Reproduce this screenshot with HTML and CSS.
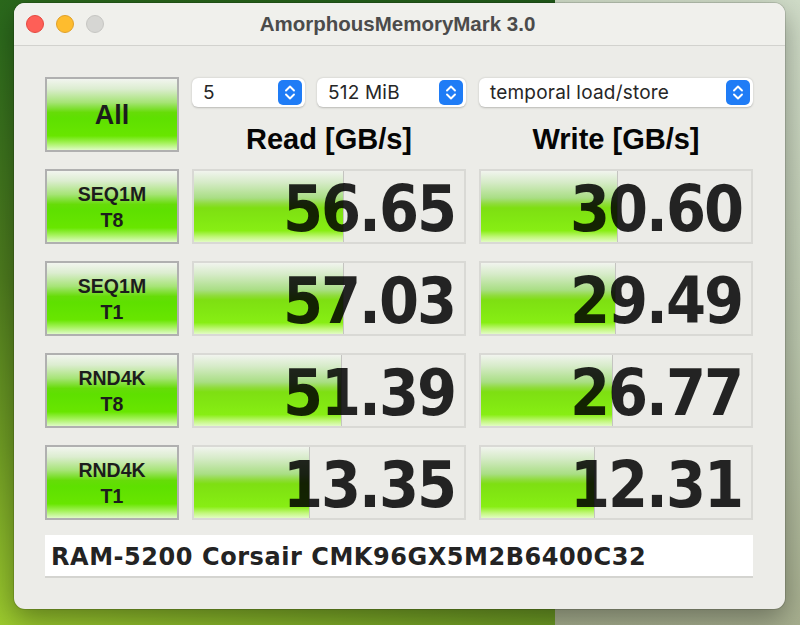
FILE: index.html
```html
<!DOCTYPE html>
<html>
	<head>
		<meta charset="utf-8" />
		<title>AmorphousMemoryMark 3.0</title>
		<link rel="stylesheet" href="styles.css">
	</head>
	<body>
		<div id="window">
			<div id="titlebar">
				<div id="lights">
					<span class="light red"></span>
					<span class="light yellow"></span>
					<span class="light gray"></span>
				</div>
				<p id="title">AmorphousMemoryMark 3.0</p>
			</div>
			<div id="content">
				<div id="grid">
					<div class="test all">All</div>
					<div id="head">
						<div class="selects">
							<div class="select count">
								<span>5</span>
								<svg class="stepper" viewBox="0 0 24 25"><rect width="24" height="25" rx="5"/><path d="M8 10.5 L12 6.5 L16 10.5 M8 14.5 L12 18.5 L16 14.5"/></svg>
							</div>
							<div class="select size">
								<span>512 MiB</span>
								<svg class="stepper" viewBox="0 0 24 25"><rect width="24" height="25" rx="5"/><path d="M8 10.5 L12 6.5 L16 10.5 M8 14.5 L12 18.5 L16 14.5"/></svg>
							</div>
						</div>
						<div class="select mode">
							<span>temporal load/store</span>
							<svg class="stepper" viewBox="0 0 24 25"><rect width="24" height="25" rx="5"/><path d="M8 10.5 L12 6.5 L16 10.5 M8 14.5 L12 18.5 L16 14.5"/></svg>
						</div>
						<p class="label">Read [GB/s]</p>
						<p class="label">Write [GB/s]</p>
					</div>

					<div class="test">SEQ1M<br>T8</div>
					<div class="meter"><div class="fill" style="width:55%"></div><span>56.65</span></div>
					<div class="meter"><div class="fill" style="width:50.4%"></div><span>30.60</span></div>

					<div class="test">SEQ1M<br>T1</div>
					<div class="meter"><div class="fill" style="width:55%"></div><span>57.03</span></div>
					<div class="meter"><div class="fill" style="width:49.6%"></div><span>29.49</span></div>

					<div class="test">RND4K<br>T8</div>
					<div class="meter"><div class="fill" style="width:54.4%"></div><span>51.39</span></div>
					<div class="meter"><div class="fill" style="width:48.5%"></div><span>26.77</span></div>

					<div class="test">RND4K<br>T1</div>
					<div class="meter"><div class="fill" style="width:42.7%"></div><span>13.35</span></div>
					<div class="meter"><div class="fill" style="width:42%"></div><span>12.31</span></div>
				</div>
				<div id="info">RAM-5200 Corsair CMK96GX5M2B6400C32</div>
			</div>
		</div>
	</body>
</html>
```
FILE: styles.css
```css
p{
	margin: 0;
}
body{
	margin: 0;
	height: 625px;
	overflow: hidden;
	padding: 3px 0 0 14px;
	box-sizing: border-box;
	font-family: "Liberation Sans", Arial, sans-serif;
	background:
		linear-gradient(180deg, #d0dcc8 0%, #bcc8ae 55%, #a6ae8e 100%) right top / 245px 100% no-repeat,
		linear-gradient(200deg, #1d5418 0%, #2c6a1c 35%, #4e7c1e 62%, #6f9c24 80%, #9cca2e 100%);
}
#window{
	width: 771px;
	height: 606px;
	background: #ecece8;
	border-radius: 11px;
	box-shadow: 0 0 0 1px rgba(0,0,0,0.12), 0 10px 28px rgba(0,0,0,0.35);
	overflow: hidden;
}
#titlebar{
	height: 42px;
	background: #f0f0ec;
	border-bottom: 1px solid #d2d2ce;
	display: flex;
	align-items: center;
	position: relative;
}
#lights{
	display: flex;
	gap: 12px;
	padding-left: 12px;
}
.light{
	width: 18px;
	height: 18px;
	border-radius: 50%;
	box-sizing: border-box;
}
.light.red{
	background: #fe5f57;
	border: 1px solid #e5483f;
}
.light.yellow{
	background: #febc2e;
	border: 1px solid #e0a028;
}
.light.gray{
	background: #d6d6d3;
	border: 1px solid #c6c6c3;
}
#title{
	position: absolute;
	left: 0;
	right: 0;
	text-align: center;
	font-weight: bold;
	font-size: 20.5px;
	color: #4b4b4b;
	padding-right: 4px;
	pointer-events: none;
}
#content{
	padding: 31px 32px 0 31px;
}
#grid{
	display: grid;
	grid-template-columns: 134px 274px 274px;
	grid-auto-rows: 75px;
	column-gap: 13px;
	row-gap: 17px;
}
.test{
	box-sizing: border-box;
	border: 2px solid #b0b0b0;
	background: linear-gradient(180deg, #f2f5ef 0%, #dcedd0 14%, #a6e476 33%, #66dc08 47%, #5ee000 55%, #68e600 80%, #a4f25a 90%, #dffbc6 100%);
	display: flex;
	align-items: center;
	justify-content: center;
	text-align: center;
	font-weight: bold;
	font-size: 19.5px;
	line-height: 26px;
	color: #1c1c1c;
	padding-top: 1px;
}
.test.all{
	font-size: 27px;
}
#head{
	grid-column: 2 / 4;
	display: grid;
	grid-template-columns: 274px 274px;
	grid-template-rows: 29px auto;
	column-gap: 13px;
	padding-top: 1px;
}
.selects{
	display: flex;
	gap: 12px;
}
.select{
	display: flex;
	align-items: center;
	justify-content: space-between;
	height: 29px;
	box-sizing: border-box;
	padding: 0 3px 0 11px;
	background: #fff;
	border-radius: 6px;
	box-shadow: 0 0.5px 2px rgba(0,0,0,0.22);
	font-family: Inter, "Liberation Sans", sans-serif;
	font-size: 19px;
	letter-spacing: 0.2px;
	color: #262626;
}
.select.count{
	width: 113px;
}
.select.size{
	flex: 1;
}
.stepper{
	width: 24px;
	height: 25px;
}
.stepper rect{
	fill: #1f7cf6;
}
.stepper path{
	fill: none;
	stroke: #fff;
	stroke-width: 1.9;
	stroke-linecap: round;
	stroke-linejoin: round;
}
.label{
	text-align: center;
	font-weight: bold;
	font-size: 29px;
	line-height: 34px;
	margin-top: 15px;
	color: #050505;
}
.meter{
	position: relative;
	box-sizing: border-box;
	border: 2px solid #d9d9d5;
	background: #ebebe7;
	display: flex;
	align-items: center;
	justify-content: flex-end;
	padding: 5px 9px 0 0;
}
.fill{
	position: absolute;
	left: 0;
	top: 0;
	bottom: 0;
	border-right: 1px solid #c4c4c0;
	background: linear-gradient(180deg, #f1f4ee 0%, #d6ebc8 16%, #a9de84 38%, #8fdc3c 46%, #7edf12 52%, #82e812 70%, #88ee14 84%, #c2f77c 93%, #e2fcc4 100%);
}
.meter span{
	position: relative;
	font-family: "DejaVu Sans Condensed", "DejaVu Sans", sans-serif;
	font-stretch: condensed;
	font-weight: bold;
	font-size: 64px;
	letter-spacing: -2px;
	line-height: 64px;
	color: rgba(0,0,0,0.85);
}
#info{
	margin-top: 15px;
	height: 43px;
	box-sizing: border-box;
	background: #fff;
	border-bottom: 2px solid #d4d4d0;
	padding: 3px 0 0 6px;
	display: flex;
	align-items: center;
	font-family: "DejaVu Sans", sans-serif;
	font-weight: bold;
	font-size: 24px;
	letter-spacing: 0.55px;
	color: #232323;
}
```
